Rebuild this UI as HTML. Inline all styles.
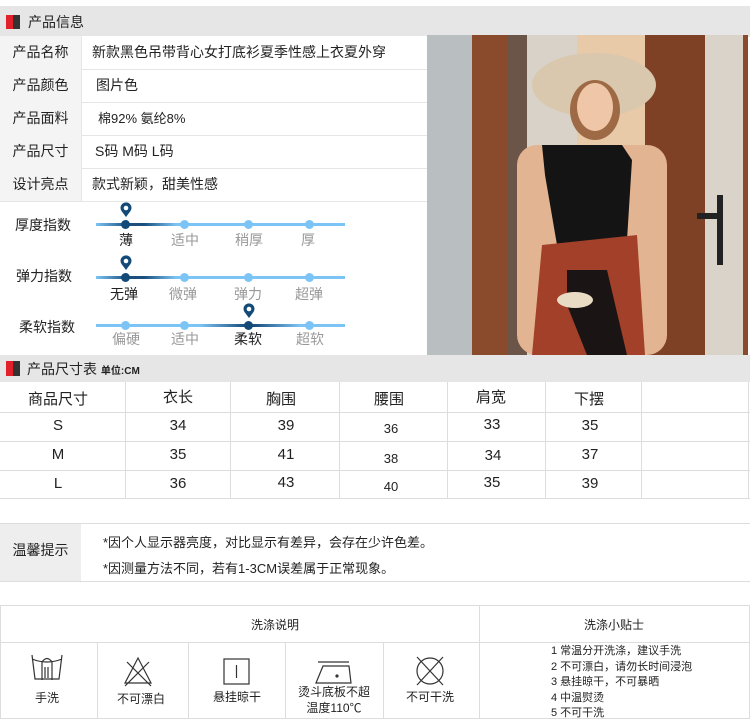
<!DOCTYPE html>
<html><head><meta charset="utf-8"><style>
*{margin:0;padding:0;box-sizing:border-box}
body{width:750px;height:726px;background:#fff;position:relative;overflow:hidden;font-family:"Liberation Sans","Noto Sans CJK SC",sans-serif;color:#222}
.a{position:absolute}
.hd{background:#e6e6e6}
.mk{width:14px;height:14px;background:linear-gradient(90deg,#e2202c 50%,#333 50%)}
.lb{background:#f4f4f4;border-bottom:1px solid #e6e6e6;font-size:14px;text-align:center;line-height:33px}
.vl{border-bottom:1px solid #e6e6e6;font-size:14px;line-height:33px;padding-left:10px}
.tr{height:3px;background:#7cc4f5}
.dot{width:9px;height:9px;border-radius:50%;background:#7cc4f5}
.sl{font-size:14px;color:#999;transform:translateX(-50%);white-space:nowrap}
.on{color:#222}
.c{font-size:15px;text-align:center;transform:translateX(-50%);white-space:nowrap}
</style></head><body>
<div class="a hd" style="left:0;top:6px;width:750px;height:31px"></div>
<div class="a mk" style="left:6px;top:15px"></div>
<div class="a" style="left:28px;top:12px;font-size:14px">产品信息</div>
<div class="a" style="left:0;top:36px;width:427px;height:166px;background:#fff"></div>
<div class="a lb" style="left:0;top:36px;width:81px;height:34px">产品名称</div>
<div class="a lb" style="left:0;top:69px;width:81px;height:34px">产品颜色</div>
<div class="a lb" style="left:0;top:102px;width:81px;height:34px">产品面料</div>
<div class="a lb" style="left:0;top:135px;width:81px;height:34px">产品尺寸</div>
<div class="a lb" style="left:0;top:168px;width:81px;height:34px">设计亮点</div>
<div class="a vl" style="left:81px;top:36px;width:346px;height:34px;border-left:1px solid #e6e6e6">新款黑色吊带背心女打底衫夏季性感上衣夏外穿</div>
<div class="a vl" style="left:81px;top:69px;width:346px;height:34px;border-left:1px solid #e6e6e6;padding-left:14px">图片色</div>
<div class="a vl" style="left:81px;top:102px;width:346px;height:34px;border-left:1px solid #e6e6e6;padding-left:16px;font-size:13px">棉92% 氨纶8%</div>
<div class="a vl" style="left:81px;top:135px;width:346px;height:34px;border-left:1px solid #e6e6e6;padding-left:13px">S码 M码 L码</div>
<div class="a vl" style="left:81px;top:168px;width:346px;height:34px;border-left:1px solid #e6e6e6">款式新颖，甜美性感</div>

<div class="a" style="left:15px;top:215px;font-size:14px">厚度指数</div>
<div class="a tr" style="left:96px;top:223px;width:249px"></div>
<div class="a" style="left:96px;top:223px;width:80px;height:3px;background:linear-gradient(90deg,#7cc4f5,#1a4f7e 40%,#1a4f7e 60%,#7cc4f5)"></div>
<div class="a dot" style="left:121px;top:220px;background:#134a78"></div>
<div class="a dot" style="left:180px;top:220px"></div><div class="a dot" style="left:244px;top:220px"></div><div class="a dot" style="left:305px;top:220px"></div>
<svg class="a" style="left:119px;top:202px" width="14" height="16" viewBox="0 0 14 16"><path d="M7 15 L2.5 9 A5.5 5.5 0 1 1 11.5 9 Z" fill="#134a78"/><circle cx="7" cy="6" r="2.3" fill="#fff"/></svg>
<div class="a sl on" style="left:126px;top:230px">薄</div><div class="a sl" style="left:185px;top:230px">适中</div><div class="a sl" style="left:249px;top:230px">稍厚</div><div class="a sl" style="left:308px;top:230px">厚</div>

<div class="a" style="left:16px;top:266px;font-size:14px">弹力指数</div>
<div class="a tr" style="left:96px;top:276px;width:249px"></div>
<div class="a" style="left:96px;top:276px;width:80px;height:3px;background:linear-gradient(90deg,#7cc4f5,#1a4f7e 40%,#1a4f7e 60%,#7cc4f5)"></div>
<div class="a dot" style="left:121px;top:273px;background:#134a78"></div>
<div class="a dot" style="left:180px;top:273px"></div><div class="a dot" style="left:244px;top:273px"></div><div class="a dot" style="left:305px;top:273px"></div>
<svg class="a" style="left:119px;top:255px" width="14" height="16" viewBox="0 0 14 16"><path d="M7 15 L2.5 9 A5.5 5.5 0 1 1 11.5 9 Z" fill="#134a78"/><circle cx="7" cy="6" r="2.3" fill="#fff"/></svg>
<div class="a sl on" style="left:124px;top:284px">无弹</div><div class="a sl" style="left:183px;top:284px">微弹</div><div class="a sl" style="left:248px;top:284px">弹力</div><div class="a sl" style="left:309px;top:284px">超弹</div>

<div class="a" style="left:19px;top:317px;font-size:14px">柔软指数</div>
<div class="a tr" style="left:96px;top:324px;width:249px"></div>
<div class="a" style="left:200px;top:324px;width:100px;height:3px;background:linear-gradient(90deg,#7cc4f5,#1a4f7e 45%,#1a4f7e 55%,#7cc4f5)"></div>
<div class="a dot" style="left:121px;top:321px"></div><div class="a dot" style="left:180px;top:321px"></div>
<div class="a dot" style="left:244px;top:321px;background:#134a78"></div><div class="a dot" style="left:305px;top:321px"></div>
<svg class="a" style="left:242px;top:303px" width="14" height="16" viewBox="0 0 14 16"><path d="M7 15 L2.5 9 A5.5 5.5 0 1 1 11.5 9 Z" fill="#134a78"/><circle cx="7" cy="6" r="2.3" fill="#fff"/></svg>
<div class="a sl" style="left:126px;top:329px">偏硬</div><div class="a sl" style="left:185px;top:329px">适中</div><div class="a sl on" style="left:248px;top:329px">柔软</div><div class="a sl" style="left:310px;top:329px">超软</div>
<div class="a" style="left:427px;top:36px;width:3px;height:320px;background:#ccc"></div>

<svg class="a" style="left:427px;top:35px" width="321" height="320" viewBox="0 0 321 320">
<rect width="321" height="320" fill="#cfcbc4"/>
<rect x="0" width="45" height="320" fill="#b9bec0"/>
<rect x="45" width="35" height="320" fill="#8a4a2c"/>
<rect x="80" width="20" height="320" fill="#6b5448"/>
<rect x="100" width="60" height="320" fill="#d8d2c8"/>
<rect x="150" width="70" height="320" fill="#e8c9a8"/>
<rect x="218" width="60" height="320" fill="#7e4126"/>
<rect x="278" width="40" height="320" fill="#d9d3ca"/>
<rect x="316" width="5" height="320" fill="#8a4a2c"/>
<rect x="290" y="160" width="6" height="70" fill="#222"/>
<rect x="270" y="178" width="24" height="6" fill="#222"/>
<ellipse cx="167" cy="50" rx="62" ry="32" fill="#d9c8ad"/>
<ellipse cx="168" cy="75" rx="25" ry="30" fill="#9d6a45"/>
<ellipse cx="168" cy="72" rx="18" ry="24" fill="#efc7a8"/>
<rect x="90" y="110" width="150" height="210" fill="#e3b491" rx="20"/>
<path d="M115 110 L195 110 L205 125 L200 205 L130 210 L118 140 Z" fill="#141414"/>
<path d="M115 210 L210 200 L218 320 L105 320 Z" fill="#a3402a"/>
<path d="M140 235 L180 235 L200 320 L160 320 L140 270 Z" fill="#1b1414"/>
<ellipse cx="148" cy="265" rx="18" ry="8" fill="#e9dcc5"/>
</svg>

<div class="a hd" style="left:0;top:355px;width:750px;height:27px"></div>
<div class="a mk" style="left:6px;top:361px;height:15px"></div>
<div class="a" style="left:27px;top:359px;font-size:14px">产品尺寸表 <span style="font-size:10px;font-weight:bold">单位:CM</span></div>
<svg class="a" style="left:0;top:382px" width="750" height="117">
<g stroke="#ddd" stroke-width="1">
<line x1="0" y1="30.5" x2="750" y2="30.5"/><line x1="0" y1="59.5" x2="750" y2="59.5"/><line x1="0" y1="88.5" x2="750" y2="88.5"/><line x1="0" y1="116.5" x2="750" y2="116.5"/>
<line x1="125.5" y1="0" x2="125.5" y2="117"/><line x1="230.5" y1="0" x2="230.5" y2="117"/><line x1="339.5" y1="0" x2="339.5" y2="117"/><line x1="447.5" y1="0" x2="447.5" y2="117"/><line x1="545.5" y1="0" x2="545.5" y2="117"/><line x1="641.5" y1="0" x2="641.5" y2="117"/><line x1="748.5" y1="0" x2="748.5" y2="117"/>
</g></svg>
<div class="a c" style="left:58px;top:388px">商品尺寸</div><div class="a c" style="left:178px;top:386px">衣长</div><div class="a c" style="left:281px;top:388px">胸围</div><div class="a c" style="left:389px;top:388px">腰围</div><div class="a c" style="left:491px;top:386px">肩宽</div><div class="a c" style="left:589px;top:388px">下摆</div>
<div class="a c" style="left:58px;top:417px">S</div><div class="a c" style="left:178px;top:417px">34</div><div class="a c" style="left:286px;top:417px">39</div><div class="a c" style="left:391px;top:421px;font-size:13px">36</div><div class="a c" style="left:492px;top:416px">33</div><div class="a c" style="left:590px;top:417px">35</div>
<div class="a c" style="left:58px;top:446px">M</div><div class="a c" style="left:178px;top:446px">35</div><div class="a c" style="left:286px;top:446px">41</div><div class="a c" style="left:391px;top:451px;font-size:13px">38</div><div class="a c" style="left:493px;top:447px">34</div><div class="a c" style="left:590px;top:446px">37</div>
<div class="a c" style="left:58px;top:475px">L</div><div class="a c" style="left:178px;top:475px">36</div><div class="a c" style="left:286px;top:474px">43</div><div class="a c" style="left:391px;top:479px;font-size:13px">40</div><div class="a c" style="left:492px;top:474px">35</div><div class="a c" style="left:590px;top:475px">39</div>

<div class="a" style="left:0;top:523px;width:750px;height:59px;border-top:1px solid #ddd;border-bottom:1px solid #ddd"></div>
<div class="a" style="left:0;top:524px;width:81px;height:57px;background:#eee;font-size:14px;line-height:52px;text-align:center">温馨提示</div>
<div class="a" style="left:103px;top:532px;font-size:13px">*因个人显示器亮度，对比显示有差异，会存在少许色差。</div>
<div class="a" style="left:103px;top:558px;font-size:13px">*因测量方法不同，若有1-3CM误差属于正常现象。</div>

<svg class="a" style="left:0;top:605px" width="750" height="114">
<g stroke="#ddd" stroke-width="1" fill="none">
<rect x="0.5" y="0.5" width="749" height="113"/>
<line x1="0" y1="37.5" x2="750" y2="37.5"/>
<line x1="479.5" y1="0" x2="479.5" y2="114"/>
<line x1="97.5" y1="37" x2="97.5" y2="114"/><line x1="188.5" y1="37" x2="188.5" y2="114"/><line x1="285.5" y1="37" x2="285.5" y2="114"/><line x1="383.5" y1="37" x2="383.5" y2="114"/>
</g>
<g stroke="#333" stroke-width="1.2" fill="none">
<path d="M32 50 L35 74 L59 74 L62 50 M32 54 Q47 60 62 54"/>
<path d="M42 75 L42 57 Q47 50 52 57 L52 75 M45 62 V73 M48 62 V73"/>
<path d="M125 78 L138 53 L151 78 Z M127 57 L151 81 M149 57 L125 81"/>
<rect x="224" y="54" width="25" height="25"/><line x1="236.5" y1="60" x2="236.5" y2="73"/>
<path d="M316 78 L323 61 L349 61 L351 78 Z M318 57 H349"/>
<circle cx="430" cy="66" r="13"/><path d="M417 52 L443 80 M443 52 L417 80"/>
</g>
<circle cx="337" cy="71" r="1.6" fill="#333"/>
</svg>
<div class="a c" style="left:275px;top:616px;font-size:12px">洗涤说明</div>
<div class="a c" style="left:614px;top:616px;font-size:12px">洗涤小贴士</div>
<div class="a c" style="left:47px;top:689px;font-size:12px">手洗</div>
<div class="a c" style="left:141px;top:690px;font-size:12px">不可漂白</div>
<div class="a c" style="left:237px;top:688px;font-size:12px">悬挂晾干</div>
<div class="a c" style="left:334px;top:684px;font-size:12px;line-height:16px">烫斗底板不超<br>温度110℃</div>
<div class="a c" style="left:430px;top:688px;font-size:12px">不可干洗</div>
<div class="a" style="left:551px;top:644px;font-size:11px;line-height:15.5px">1 常温分开洗涤，建议手洗<br>2 不可漂白，请勿长时间浸泡<br>3 悬挂晾干，不可暴晒<br>4 中温熨烫<br>5 不可干洗</div>
</body></html>
